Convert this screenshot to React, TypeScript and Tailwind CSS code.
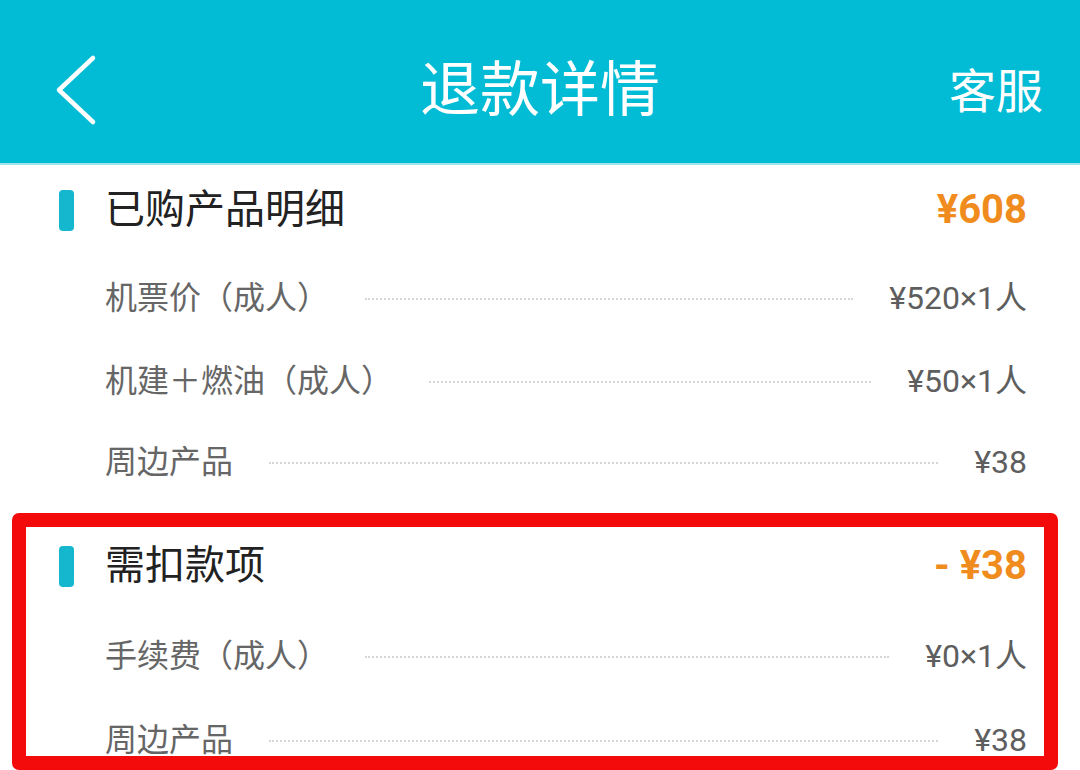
import React from "react";

const FONT = { fontFamily: '"Roboto", "Noto Sans CJK SC", "Noto Sans", sans-serif' };

function Row({ label, value, h }: { label: string; value: string; h: string }) {
  return (
    <div className={`flex items-center pl-[105px] pr-[53px] ${h}`}>
      <span className="text-[32px] text-[#666666] whitespace-nowrap leading-none">{label}</span>
      <div className="flex-1 mx-[36px] border-t-2 border-dotted border-[#d6d6d6] mt-[2px]" />
      <span className="text-[32px] text-[#5e5e5e] whitespace-nowrap leading-none">{value}</span>
    </div>
  );
}

function Title({ title, amount }: { title: string; amount: string }) {
  return (
    <div className="flex items-center h-[90px] pl-[59px] pr-[53px]">
      <div className="w-[15px] h-[41px] rounded-[4px] bg-[#14b7cd]" />
      <span className="ml-[31px] text-[40px] text-[#222222] leading-none">{title}</span>
      <span className="ml-auto text-[40px] font-bold text-[#f08c1e] leading-none">{amount}</span>
    </div>
  );
}

export default function App() {
  return (
    <div className="w-[1080px] h-[770px] bg-white overflow-hidden relative" style={FONT}>
      <div className="h-[163px] bg-[#02bcd6] flex items-center relative">
        <svg className="absolute left-[50px] top-[50px]" width="52" height="78" viewBox="0 0 52 78">
          <polyline points="43,8 9,40 43,72" fill="none" stroke="white" strokeWidth="4.5" strokeLinecap="round" strokeLinejoin="round" />
        </svg>
        <div className="flex-1 text-center text-[60px] text-white leading-none pt-[18px]">退款详情</div>
        <div className="absolute right-[37px] top-[68px] text-[47px] text-white leading-none">客服</div>
      </div>
      <div className="h-[2px] bg-[#9fe3ec]" />
      <div className="flex flex-col">
        <Title title="已购产品明细" amount="¥608" />
        <Row label="机票价（成人）" value="¥520×1人" h="h-[85px]" />
        <Row label="机建＋燃油（成人）" value="¥50×1人" h="h-[81px]" />
        <Row label="周边产品" value="¥38" h="h-[81px]" />
        <div className="mt-[19px]">
          <Title title="需扣款项" amount="- ¥38" />
        </div>
        <Row label="手续费（成人）" value="¥0×1人" h="h-[89px]" />
        <Row label="周边产品" value="¥38" h="h-[80px]" />
      </div>
      <div className="absolute left-[12px] top-[513px] w-[1046px] h-[257px] border-[14px] border-[#f30a0a] rounded-[7px] pointer-events-none" />
    </div>
  );
}
